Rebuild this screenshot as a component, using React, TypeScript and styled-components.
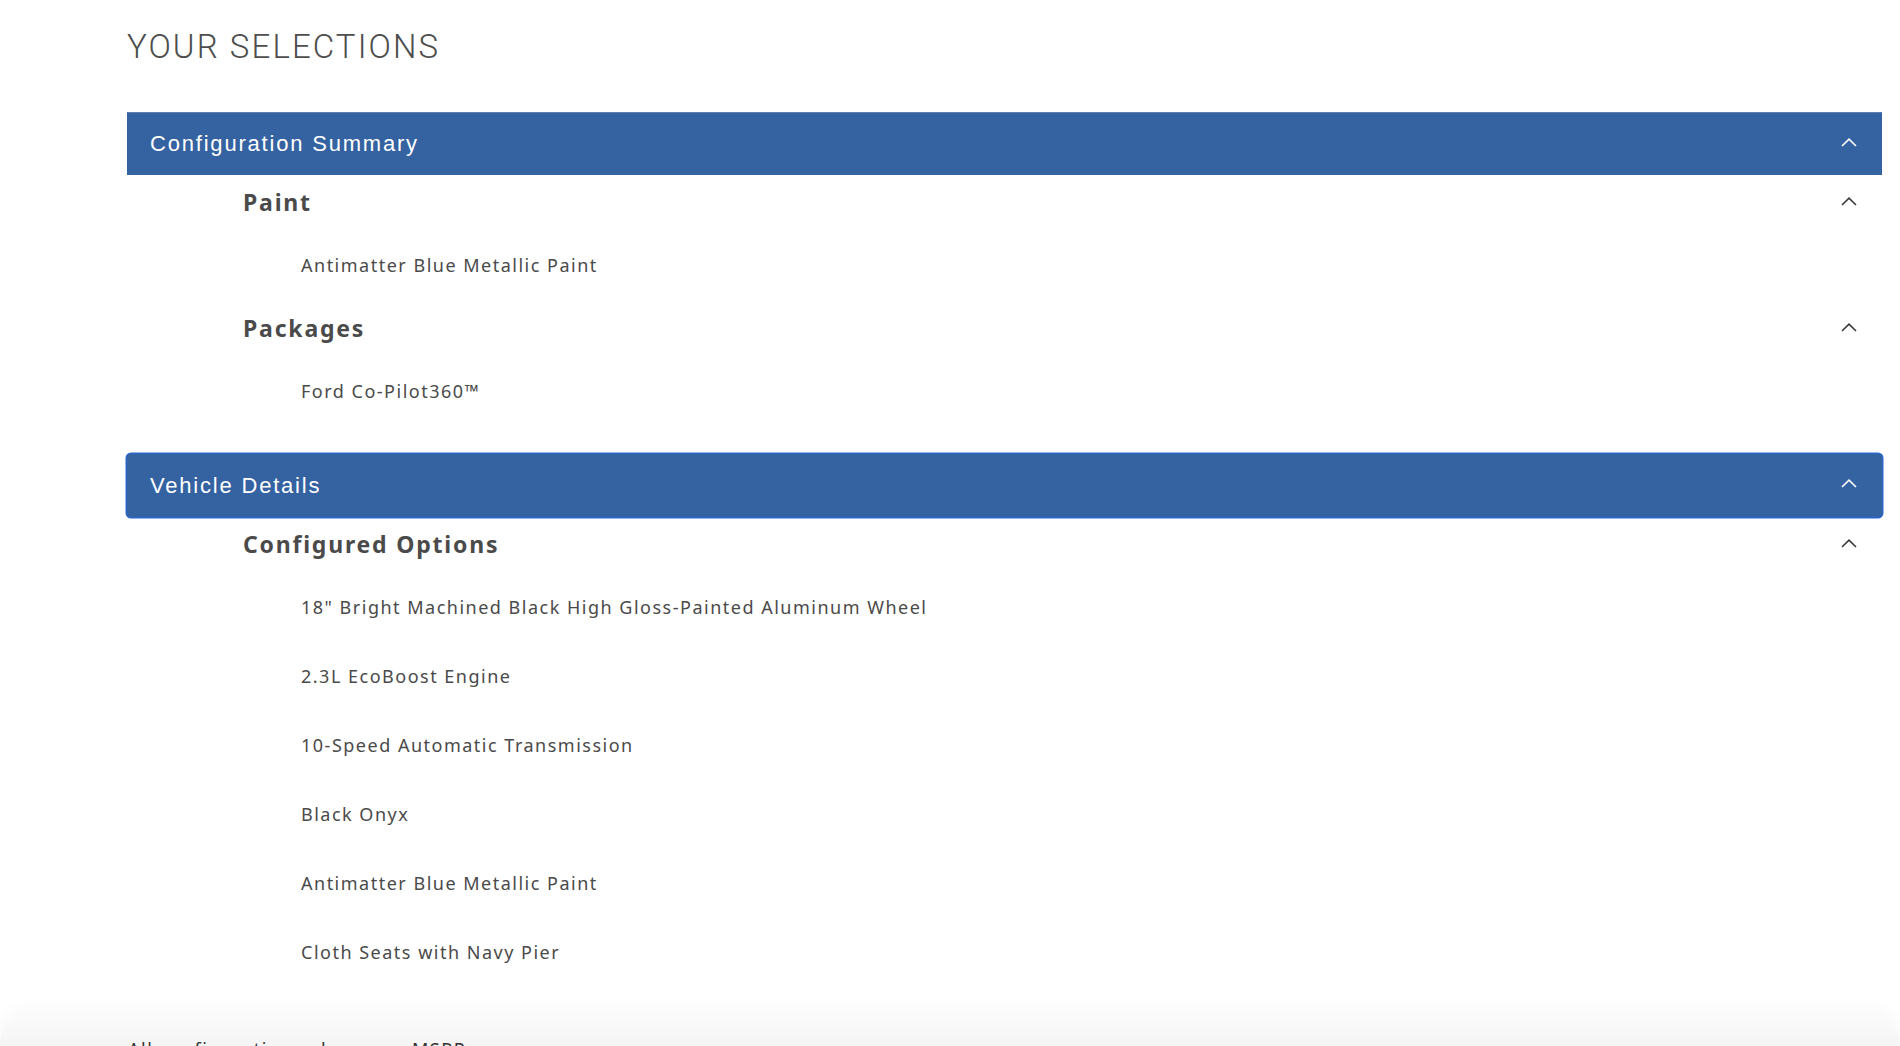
import styled, { createGlobalStyle } from "styled-components";

const GlobalStyle = createGlobalStyle`
  html, body {
    margin: 0;
    padding: 0;
    overflow: hidden;
    background: #ffffff;
  }
`;

type Group = { title: string; items: string[] };
type Section = { title: string; focused?: boolean; groups: Group[] };

const sections: Section[] = [
  {
    title: "Configuration Summary",
    groups: [
      { title: "Paint", items: ["Antimatter Blue Metallic Paint"] },
      { title: "Packages", items: ["Ford Co-Pilot360™"] },
    ],
  },
  {
    title: "Vehicle Details",
    focused: true,
    groups: [
      {
        title: "Configured Options",
        items: [
          '18" Bright Machined Black High Gloss-Painted Aluminum Wheel',
          "2.3L EcoBoost Engine",
          "10-Speed Automatic Transmission",
          "Black Onyx",
          "Antimatter Blue Metallic Paint",
          "Cloth Seats with Navy Pier",
        ],
      },
    ],
  },
];

const ChevronUp = ({ light }: { light?: boolean }) => (
  <Chevron width="16" height="9" viewBox="0 0 16 9" fill="none">
    <polyline
      points="1,8 8,1.2 15,8"
      stroke={light ? "#ffffff" : "#3a3a3a"}
      strokeWidth="1.6"
    />
  </Chevron>
);

const App: React.FC = () => {
  return (
    <>
      <GlobalStyle />
      <Main>
        <Title>YOUR SELECTIONS</Title>
        {sections.map((section) => (
          <Accordion key={section.title}>
            <Bar focused={section.focused}>
              <BarTitle>{section.title}</BarTitle>
              <ChevronUp light />
            </Bar>
            {section.groups.map((group) => (
              <div key={group.title}>
                <GroupHeader>
                  <GroupTitle>{group.title}</GroupTitle>
                  <ChevronUp />
                </GroupHeader>
                {group.items.map((item, i) => (
                  <Item key={i}>{item}</Item>
                ))}
              </div>
            ))}
          </Accordion>
        ))}
      </Main>
      <Footer>
        <FooterNote>All configurations above are MSRP.</FooterNote>
      </Footer>
    </>
  );
};

export default App;

const Main = styled.main`
  padding: 27px 18px 0 127px;
`;

const Title = styled.h1`
  margin: 0 0 45px;
  font-family: Roboto, "Liberation Sans", sans-serif;
  font-weight: 300;
  font-size: 33px;
  line-height: 40px;
  letter-spacing: 2.1px;
  color: #4d4d4d;
`;

const Accordion = styled.section`
  margin-bottom: 27px;
`;

const Bar = styled.div<{ focused?: boolean }>`
  display: flex;
  align-items: center;
  justify-content: space-between;
  height: 63px;
  padding: 0 25px 0 23px;
  box-sizing: border-box;
  background-color: #3562a0;
  border-top: 1px solid #5a7fb6;
  ${({ focused }) =>
    focused &&
    `
      border-top: none;
      border-radius: 4px;
      box-shadow: 0 0 0 1.5px #2c66cc;
    `}
`;

const BarTitle = styled.span`
  font-family: "Liberation Sans", Arial, sans-serif;
  font-size: 22px;
  letter-spacing: 1.8px;
  color: #ffffff;
`;

const Chevron = styled.svg`
  flex-shrink: 0;
  display: block;
  transform: translateY(-2px);
`;

const GroupHeader = styled.div`
  display: flex;
  align-items: center;
  justify-content: space-between;
  height: 57px;
  padding: 0 25px 0 116px;
`;

const GroupTitle = styled.h3`
  margin: 0;
  padding-bottom: 4px;
  font-family: "Noto Sans", "Open Sans", sans-serif;
  font-weight: 700;
  font-size: 23px;
  letter-spacing: 1.8px;
  color: #4a4a4a;
`;

const Item = styled.div`
  display: flex;
  align-items: center;
  height: 69px;
  padding: 0 0 3px 174px;
  box-sizing: border-box;
  font-family: "Noto Sans", "Open Sans", sans-serif;
  font-size: 18px;
  letter-spacing: 1.5px;
  color: #4a4a4a;
`;

const Footer = styled.footer`
  margin-top: 2px;
  height: 80px;
  padding: 22px 0 0 128px;
  background: linear-gradient(#fbfbfb, #f3f3f3 40px);
  border-radius: 28px 28px 0 0;
  box-shadow: 0 -6px 18px rgba(0, 0, 0, 0.03);
`;

const FooterNote = styled.p`
  margin: 0;
  font-family: "Noto Sans", "Open Sans", sans-serif;
  font-size: 18px;
  letter-spacing: 1.5px;
  color: #333333;
`;
